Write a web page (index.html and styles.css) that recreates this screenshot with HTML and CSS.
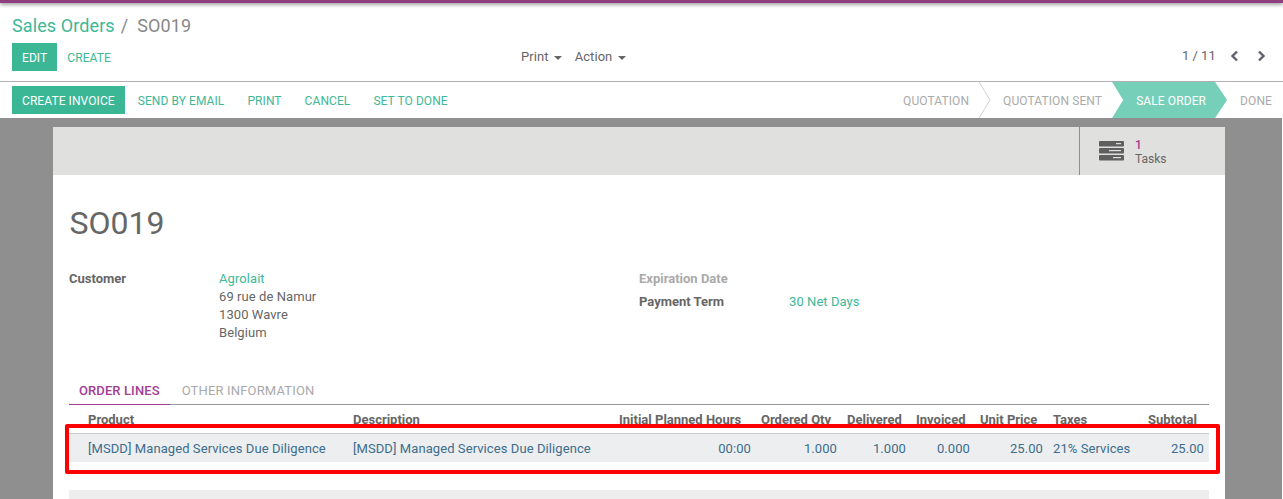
FILE: index.html
```html
<!DOCTYPE html>
<html lang="en">
<head>
    <meta charset="UTF-8">
    <meta name="viewport" content="width=device-width, initial-scale=1.0">
    <title>Sales Orders / SO019</title>
    <link rel="stylesheet" href="styles.css">
</head>
<body>
    <div class="topbar"></div>

    <div class="control-panel">
        <div class="breadcrumb">
            <a class="breadcrumb__link">Sales Orders</a>
            <span class="breadcrumb__sep">/</span>
            <span class="breadcrumb__current">SO019</span>
        </div>
        <div class="control-row">
            <div class="control-row__left">
                <button class="btn btn--primary">EDIT</button>
                <button class="btn btn--link">CREATE</button>
            </div>
            <div class="control-row__center">
                <span class="dropdown">Print <i class="caret"></i></span>
                <span class="dropdown">Action <i class="caret"></i></span>
            </div>
            <div class="pager">
                <span class="pager__count">1 / 11</span>
                <svg class="pager__arrow" width="9" height="12" viewBox="0 0 9 12"><path d="M7 1.5 2.5 6 7 10.5" fill="none" stroke="#5f5f6b" stroke-width="2.4"/></svg>
                <svg class="pager__arrow" width="9" height="12" viewBox="0 0 9 12"><path d="M2 1.5 6.500 6 2 10.500" fill="none" stroke="#5f5f6b" stroke-width="2.4"/></svg>
            </div>
        </div>
    </div>

    <div class="statusbar">
        <div class="statusbar__actions">
            <button class="btn btn--primary">CREATE INVOICE</button>
            <button class="btn btn--link">SEND BY EMAIL</button>
            <button class="btn btn--link">PRINT</button>
            <button class="btn btn--link">CANCEL</button>
            <button class="btn btn--link">SET TO DONE</button>
        </div>
        <div class="steps">
            <span class="step step--quotation">QUOTATION</span>
            <svg class="step__sep" width="12" height="36" viewBox="0 0 12 36"><path d="M0 0 11 18 0 36" fill="none" stroke="#d0d0d0"/></svg>
            <span class="step step--sent">QUOTATION SENT</span>
            <span class="step step--active">SALE ORDER</span>
            <span class="step step--done">DONE</span>
        </div>
    </div>

    <div class="content">
        <div class="sheet">
            <div class="button-box">
                <div class="stat-button">
                    <svg class="stat-button__icon" width="25" height="20" viewBox="0 0 25 20">
                        <rect y="0" width="25" height="5.500" rx="1" fill="#5f5f5f"/>
                        <rect y="7" width="25" height="5.500" rx="1" fill="#5f5f5f"/>
                        <rect y="14" width="25" height="5.500" rx="1" fill="#5f5f5f"/>
                        <rect x="17" y="2" width="5" height="1.200" fill="#e0e0de"/>
                        <rect x="10" y="9" width="12" height="1.200" fill="#e0e0de"/>
                        <rect x="14" y="16" width="8" height="1.200" fill="#e0e0de"/>
                    </svg>
                    <div class="stat-button__text">
                        <span class="stat-button__value">1</span>
                        <span class="stat-button__label">Tasks</span>
                    </div>
                </div>
            </div>

            <div class="sheet__body">
                <h1 class="title">SO019</h1>

                <div class="fields">
                    <div class="field-group field-group--left">
                        <div class="field-label">Customer</div>
                        <div class="field-value">
                            <a class="link">Agrolait</a><br>
                            69 rue de Namur<br>
                            1300 Wavre<br>
                            Belgium
                        </div>
                    </div>
                    <div class="field-group field-group--right">
                        <div class="field-label field-label--muted">Expiration Date</div>
                        <div class="field-value"></div>
                        <div class="field-label">Payment Term</div>
                        <div class="field-value"><a class="link">30 Net Days</a></div>
                    </div>
                </div>

                <div class="tabs">
                    <span class="tab tab--active">ORDER LINES</span>
                    <span class="tab">OTHER INFORMATION</span>
                </div>

                <div class="lines">
                    <div class="lines__head">
                        <span>Product</span>
                        <span>Description</span>
                        <span>Initial Planned Hours</span>
                        <span>Ordered Qty</span>
                        <span>Delivered</span>
                        <span>Invoiced</span>
                        <span>Unit Price</span>
                        <span>Taxes</span>
                        <span>Subtotal</span>
                    </div>
                    <div class="lines__row">
                        <span>[MSDD] Managed Services Due Diligence</span>
                        <span>[MSDD] Managed Services Due Diligence</span>
                        <span class="num">00:00</span>
                        <span class="num">1.000</span>
                        <span class="num">1.000</span>
                        <span class="num">0.000</span>
                        <span class="num">25.00</span>
                        <span>21% Services</span>
                        <span class="num">25.00</span>
                    </div>
                    <div class="highlight"></div>
                </div>

                <div class="lines__footer"></div>
            </div>
        </div>
    </div>
</body>
</html>
```

FILE: styles.css
```css
* {
    box-sizing: border-box;
}

html,
body {
    height: 499px;
}

body {
    margin: 0;
    overflow: hidden;
    display: flex;
    flex-direction: column;
    font-family: Roboto, "Liberation Sans", sans-serif;
    font-size: 13px;
    line-height: 18px;
    color: #666;
    background: #fff;
}

.topbar {
    height: 3px;
    background: #8f3d7e;
    box-shadow: 0 1px 4px rgba(0, 0, 0, 0.6);
    position: relative;
}

.control-panel {
    height: 79px;
    padding: 12px 0 0 12px;
    background: #fff;
    border-bottom: 1px solid #b0b0b0;
}

.breadcrumb {
    display: flex;
    align-items: center;
    height: 22px;
    font-size: 18px;
    line-height: 22px;
    letter-spacing: 0.1px;
}

.breadcrumb__link {
    color: #3eb897;
}

.breadcrumb__sep {
    margin: 0 9px 0 6px;
    color: #888;
}

.breadcrumb__current {
    color: #888;
}

.control-row {
    display: flex;
    margin-top: 6px;
}

.control-row__left {
    display: flex;
    width: 509px;
}

.control-row__center {
    display: flex;
    gap: 13px;
    height: 28px;
    align-items: center;
    width: 661px;
}

.dropdown {
    color: #666;
    letter-spacing: 0.05px;
}

.caret {
    display: inline-block;
    width: 0;
    height: 0;
    margin-left: 2px;
    vertical-align: middle;
    border-top: 4px solid #666;
    border-left: 4px solid transparent;
    border-right: 4px solid transparent;
}

.pager {
    display: flex;
    align-items: center;
    height: 26px;
    white-space: nowrap;
}

.pager__count {
    margin-right: 14px;
}

.pager__arrow {
    margin-right: 18px;
}

.pager__arrow:last-child {
    margin-right: 0;
}

.btn {
    height: 28px;
    padding: 1px 10px 0;
    border: 0;
    font-family: inherit;
    font-size: 12px;
    letter-spacing: 0.08px;
    background: none;
    color: #3eb897;
    white-space: nowrap;
}

.btn--primary {
    background: #3cb796;
    color: #fff;
}

.statusbar {
    display: flex;
    justify-content: space-between;
    height: 36px;
    padding-left: 12px;
    background: #fff;
}

.statusbar__actions {
    display: flex;
    align-items: center;
}

.statusbar__actions .btn--link {
    margin-left: 3px;
}

.steps {
    display: flex;
    align-items: stretch;
    font-size: 12px;
    letter-spacing: 0.1px;
    color: #aaa;
    margin-right: 1px;
}

.step {
    display: flex;
    align-items: center;
    padding-top: 1px;
    white-space: nowrap;
}

.step--quotation {
    margin-right: 10px;
}

.step__sep {
    margin-right: 12px;
}

.step--sent {
    margin-right: 10px;
}

.step--active {
    padding: 1px 21px 0 24px;
    color: #fff;
    background: #76cfb8;
    clip-path: polygon(0 0, calc(100% - 12px) 0, 100% 50%, calc(100% - 12px) 100%, 0 100%, 11px 50%);
}

.step--done {
    margin-left: 13px;
    padding-right: 10px;
}

.content {
    flex: 1;
    margin-right: 1px;
    padding: 9px 57px 0 53px;
    overflow: hidden;
    background: #8f8f8f;
}

.sheet {
    height: 100%;
    background: #fff;
}

.button-box {
    display: flex;
    justify-content: flex-end;
    height: 48px;
    background: #e0e0de;
}

.stat-button {
    display: flex;
    align-items: center;
    width: 146px;
    padding-left: 19px;
    border-left: 1px solid #8f8f8f;
}

.stat-button__icon {
    margin-right: 11px;
}

.stat-button__text {
    display: flex;
    flex-direction: column;
    padding-top: 2px;
    font-size: 12px;
    line-height: 14px;
}

.stat-button__value {
    color: #a23d93;
    font-weight: 500;
}

.sheet__body {
    padding: 0 16px;
}

.title {
    margin: 30px 0 0 0.5px;
    font-size: 32px;
    font-weight: 400;
    line-height: 36px;
}

.fields {
    display: flex;
    margin-top: 29px;
}

.field-group {
    display: grid;
    grid-template-columns: 150px 1fr;
    align-content: start;
}

.field-group--left {
    width: 570px;
}

.field-group--right {
    flex: 1;
    row-gap: 5px;
}

.field-label {
    font-weight: 700;
}

.field-label--muted {
    color: #aaa;
}

.field-value {
    letter-spacing: 0.07px;
}

.link {
    color: #3eb897;
}

.tabs {
    display: flex;
    margin-top: 32px;
    height: 31px;
    border-bottom: 1px solid #999;
}

.tab {
    margin-left: 2px;
    padding: 8px 10px 0;
    font-size: 13px;
    letter-spacing: 0.17px;
    color: #aaa;
}

.tab--active {
    margin-left: 0;
    color: #a23d93;
    font-weight: 500;
    letter-spacing: 0.1px;
    border-bottom: 1px solid #a23d93;
    height: 31px;
}

.lines {
    position: relative;
}

.lines__head,
.lines__row {
    display: grid;
    grid-template-columns: 279px 266px 142px 86px 69px 64px 73px 95px 66px;
    white-space: nowrap;
}

.lines__head > span,
.lines__row > span {
    padding: 0 5px;
}

.lines__head > span:first-child,
.lines__row > span:first-child {
    padding-left: 19px;
}

.lines__head {
    height: 29px;
    padding-top: 6px;
    font-weight: 700;
    border-bottom: 1px solid #ccc;
}

.lines__row {
    align-items: center;
    height: 28px;
    padding-top: 2px;
    letter-spacing: 0.08px;
    color: #3d6d8c;
    background: #eceef0;
}

.num {
    text-align: right;
}

.highlight {
    position: absolute;
    left: -4px;
    right: -11px;
    top: 19px;
    height: 50px;
    border: 4px solid #f00;
    border-radius: 2px;
}

.lines__footer {
    height: 30px;
    margin-top: 28px;
    background: #eeeeee;
}
```
